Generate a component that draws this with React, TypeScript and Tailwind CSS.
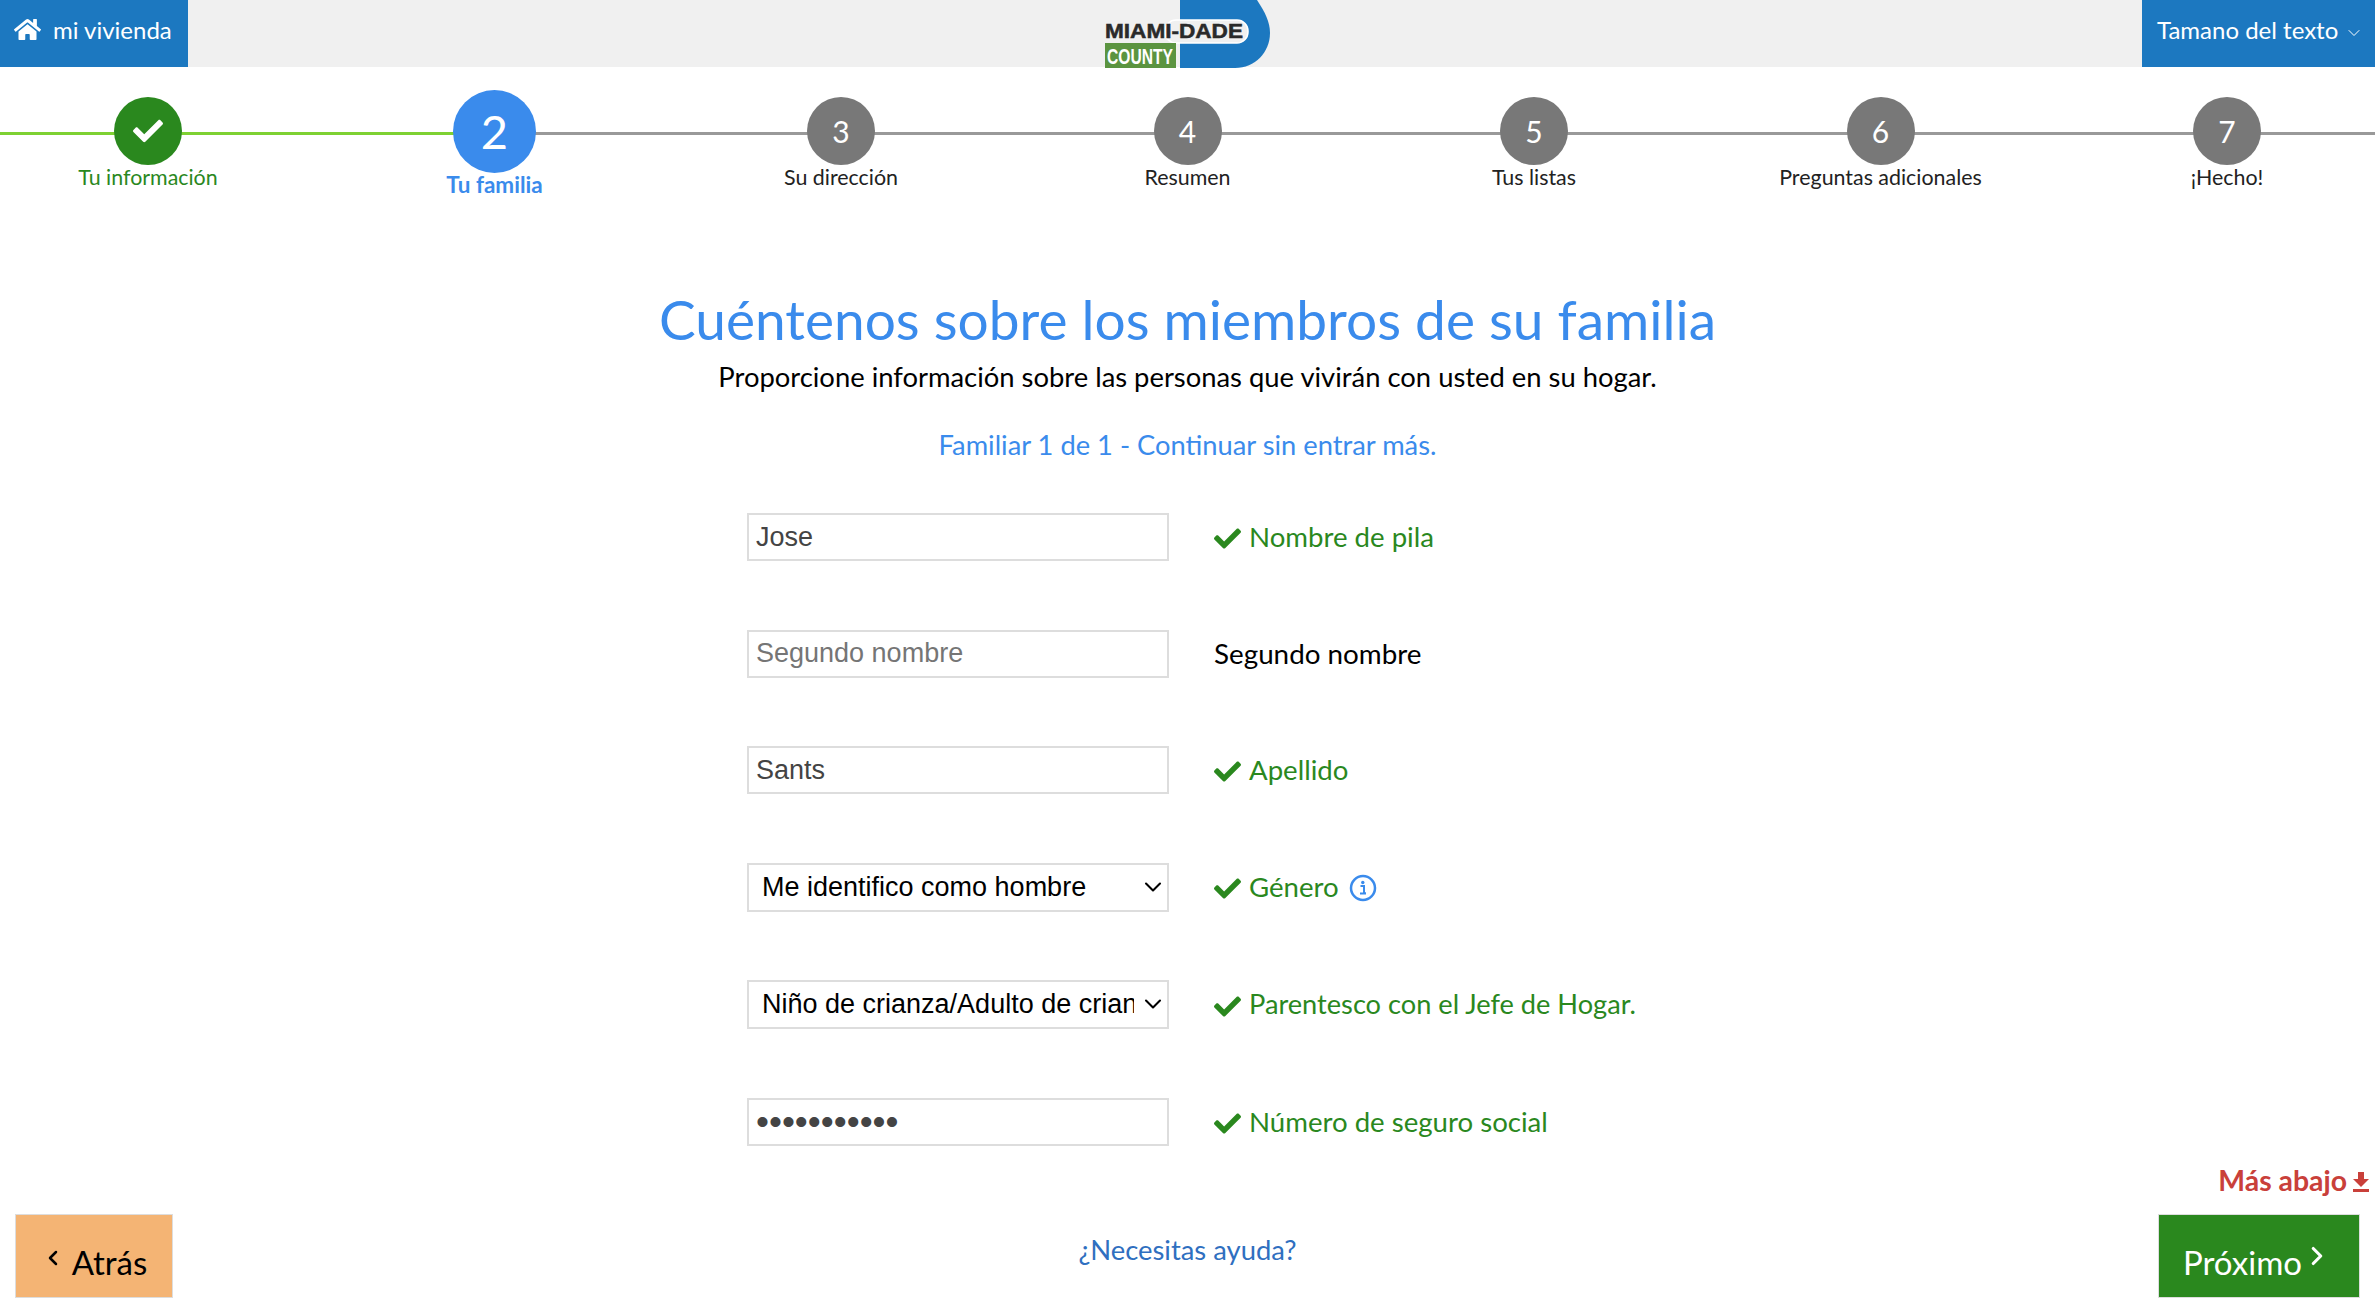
import { FC } from 'react'
import { FaCheck, FaHome } from 'react-icons/fa'
import { ChevronDown, ChevronLeft, ChevronRight } from 'lucide-react'

const steps = ['Tu información', 'Tu familia', 'Su dirección', 'Resumen', 'Tus listas', 'Preguntas adicionales', '¡Hecho!']

const Logo: FC = () => (
    <svg className="ml-[45px]" width="166" height="68" viewBox="0 0 166 68">
        <path d="M75 0 H152 C160 12 165 22 165 33 C165 52 150 68 130 68 H75 Z" fill="#1c78c0" />
        <rect x="0" y="20" width="143" height="23" rx="11" fill="#f0f0f0" />
        <rect x="60" y="20" width="83" height="23" rx="11" fill="none" stroke="#ffffff" strokeWidth="1.5" />
        <text x="0" y="38" fontFamily="Liberation Sans" fontWeight="700" fontSize="20" textLength="138" lengthAdjust="spacingAndGlyphs" fill="#2a2a2a" stroke="#2a2a2a" strokeWidth="0.5">MIAMI-DADE</text>
        <rect x="0" y="43" width="71" height="25" fill="#5b9440" />
        <text x="2" y="64" fontFamily="Liberation Sans" fontWeight="700" fontSize="22" textLength="66" lengthAdjust="spacingAndGlyphs" fill="#ffffff">COUNTY</text>
    </svg>
)

const Stepper: FC = () => (
    <div className="relative flex justify-between pt-[23px]">
        <div className="absolute left-0 top-[65px] h-[3px] w-[494px] bg-[#7ed132]"></div>
        <div className="absolute left-[494px] right-0 top-[65px] h-[3px] bg-[#999999]"></div>
        {steps.map((s, i) => {
            if (i === 1) {
                return (
                    <div key={s} className="relative flex w-[296px] flex-col items-center">
                        <div className="flex h-[83px] w-[83px] items-center justify-center rounded-full bg-[#3a8bec] text-[47px] text-white">2</div>
                        <div className="-mt-[2px] text-[22.5px] font-bold leading-[28px] text-[#3a8bec]">{s}</div>
                    </div>
                )
            }
            return (
                <div key={s} className="relative flex w-[296px] flex-col items-center pt-[7px]">
                    <div className={`flex h-[68px] w-[68px] items-center justify-center rounded-full text-[30px] text-white ${i === 0 ? 'bg-[#2a881e]' : 'bg-[#787878]'}`}>
                        {i === 0 ? <FaCheck className="h-[30px] w-[30px]" /> : i + 1}
                    </div>
                    <div className={`-mt-[2px] text-[21.4px] leading-[28px] ${i === 0 ? 'text-[#2a881e]' : 'text-[#222222]'}`}>{s}</div>
                </div>
            )
        })}
    </div>
)

const Label: FC<{ text: string; info?: boolean; size?: string }> = ({ text, info, size = 'text-[27.6px]' }) => (
    <div className={`flex items-center text-[#2a881e] ${size}`}>
        <FaCheck className="mr-[8px] mt-[4px] h-[27px] w-[27px]" />
        <span>{text}</span>
        {info && (
            <svg className="ml-[10px] mt-[2px]" width="28" height="28" viewBox="0 0 28 28" fill="none">
                <circle cx="14" cy="14" r="12" stroke="#3a8bec" strokeWidth="2.5" />
                <path d="M11.5 12 H15 V19 H16.5 M11 19.5 H17" stroke="#3a8bec" strokeWidth="2" />
                <circle cx="13.8" cy="8.5" r="1.7" fill="#3a8bec" />
            </svg>
        )}
    </div>
)

const Select: FC<{ value: string }> = ({ value }) => (
    <div className="relative h-[49px] w-[422px] flex-none">
        <select className="h-full w-full appearance-none border-2 border-[#dddddd] bg-white pl-[13px] pr-[33px] font-['Liberation_Sans',sans-serif] text-[27px] text-black outline-none" defaultValue={value}>
            <option value={value}>{value}</option>
        </select>
        <ChevronDown className="pointer-events-none absolute right-[2px] top-[10px] h-[28px] w-[28px] text-black" strokeWidth={1.8} />
    </div>
)

const inputCls = "h-[48px] w-[422px] border-2 border-[#dddddd] bg-white pl-[7px] font-['Liberation_Sans',sans-serif] text-[27px] text-[#444444] outline-none placeholder:text-[#757575]"

const App: FC = () => {
    return (
        <div className="relative flex h-screen w-[2375px] flex-col overflow-hidden bg-white font-['Lato',sans-serif]">
            <header className="flex h-[67px] items-start justify-between bg-[#f0f0f0]">
                <a className="flex h-[67px] w-[188px] items-center bg-[#1c78c0] pb-[7px] pl-[14px] text-[24px] text-white">
                    <FaHome className="mb-[2px] mr-[12px] h-[27px] w-[27px]" />
                    mi vivienda
                </a>
                <Logo />
                <a className="flex h-[67px] w-[233px] items-center bg-[#1c78c0] pb-[7px] pl-[15px] text-[24px] text-white">
                    Tamano del texto
                    <ChevronDown className="ml-[6px] mt-[6px] h-[20px] w-[20px]" strokeWidth={1.2} />
                </a>
            </header>

            <Stepper />

            <main className="flex-1">
                <h1 className="mt-[85px] text-center text-[55px] leading-[70px] text-[#3a8bec]">
                    Cuéntenos sobre los miembros de su familia
                </h1>
                <p className="mt-[4px] text-center text-[27.4px] leading-[38px] text-black">
                    Proporcione información sobre las personas que vivirán con usted en su hogar.
                </p>
                <p className="mt-[30px] text-center text-[27.3px] leading-[38px] text-[#3a8bec]">
                    Familiar 1 de 1 - Continuar sin entrar más.
                </p>

                <form className="mt-[49px] flex flex-col gap-[68.5px] pl-[747px]">
                    <div className="flex items-center gap-[45px]">
                        <input className={inputCls} defaultValue="Jose" />
                        <Label text="Nombre de pila" />
                    </div>
                    <div className="flex items-center gap-[45px]">
                        <input className={inputCls} placeholder="Segundo nombre" />
                        <span className="text-[27.8px] text-black">Segundo nombre</span>
                    </div>
                    <div className="flex items-center gap-[45px]">
                        <input className={inputCls} defaultValue="Sants" />
                        <Label text="Apellido" />
                    </div>
                    <div className="flex items-center gap-[45px]">
                        <Select value="Me identifico como hombre" />
                        <Label text="Género" info />
                    </div>
                    <div className="flex items-center gap-[45px]">
                        <Select value="Niño de crianza/Adulto de crianza" />
                        <Label text="Parentesco con el Jefe de Hogar." size="text-[27.2px]" />
                    </div>
                    <div className="flex items-center gap-[45px]">
                        <input className={`${inputCls} text-[37px]`} type="password" defaultValue="12345678901" />
                        <Label text="Número de seguro social" />
                    </div>
                </form>
            </main>

            <div className="absolute right-[5px] top-[1165px] flex items-center text-[28.4px] font-bold leading-[30px] text-[#c9403a]">
                Más abajo
                <svg className="ml-[5px] mt-[4px]" width="18" height="20" viewBox="0 0 18 20" fill="#c9403a">
                    <path d="M6 0 H12 V7 H17 L9 15 L1 7 H6 Z" />
                    <rect x="1" y="17" width="16" height="3" />
                </svg>
            </div>

            <footer className="grid grid-cols-[1fr_auto_1fr] items-start px-[15px] pb-[5px]">
                <button className="flex h-[84px] w-[158px] items-center justify-center justify-self-start border-[1.5px] border-[#dddddd] bg-[#f4b474] pt-[13px] text-[33px] text-black">
                    <ChevronLeft className="mb-[10px] mr-[7px] h-[24px] w-[24px]" strokeWidth={2.5} />
                    Atrás
                </button>
                <a className="mt-[15px] text-[27.4px] text-[#2f6fc0]">¿Necesitas ayuda?</a>
                <button className="flex h-[84px] w-[202px] items-center justify-center justify-self-end border-[1.5px] border-[#dddddd] bg-[#2a881e] pr-[3px] pt-[13px] text-[33px] text-white">
                    Próximo
                    <ChevronRight className="mb-[14px] h-[30px] w-[30px]" strokeWidth={2.5} />
                </button>
            </footer>
        </div>
    )
}

export default App
